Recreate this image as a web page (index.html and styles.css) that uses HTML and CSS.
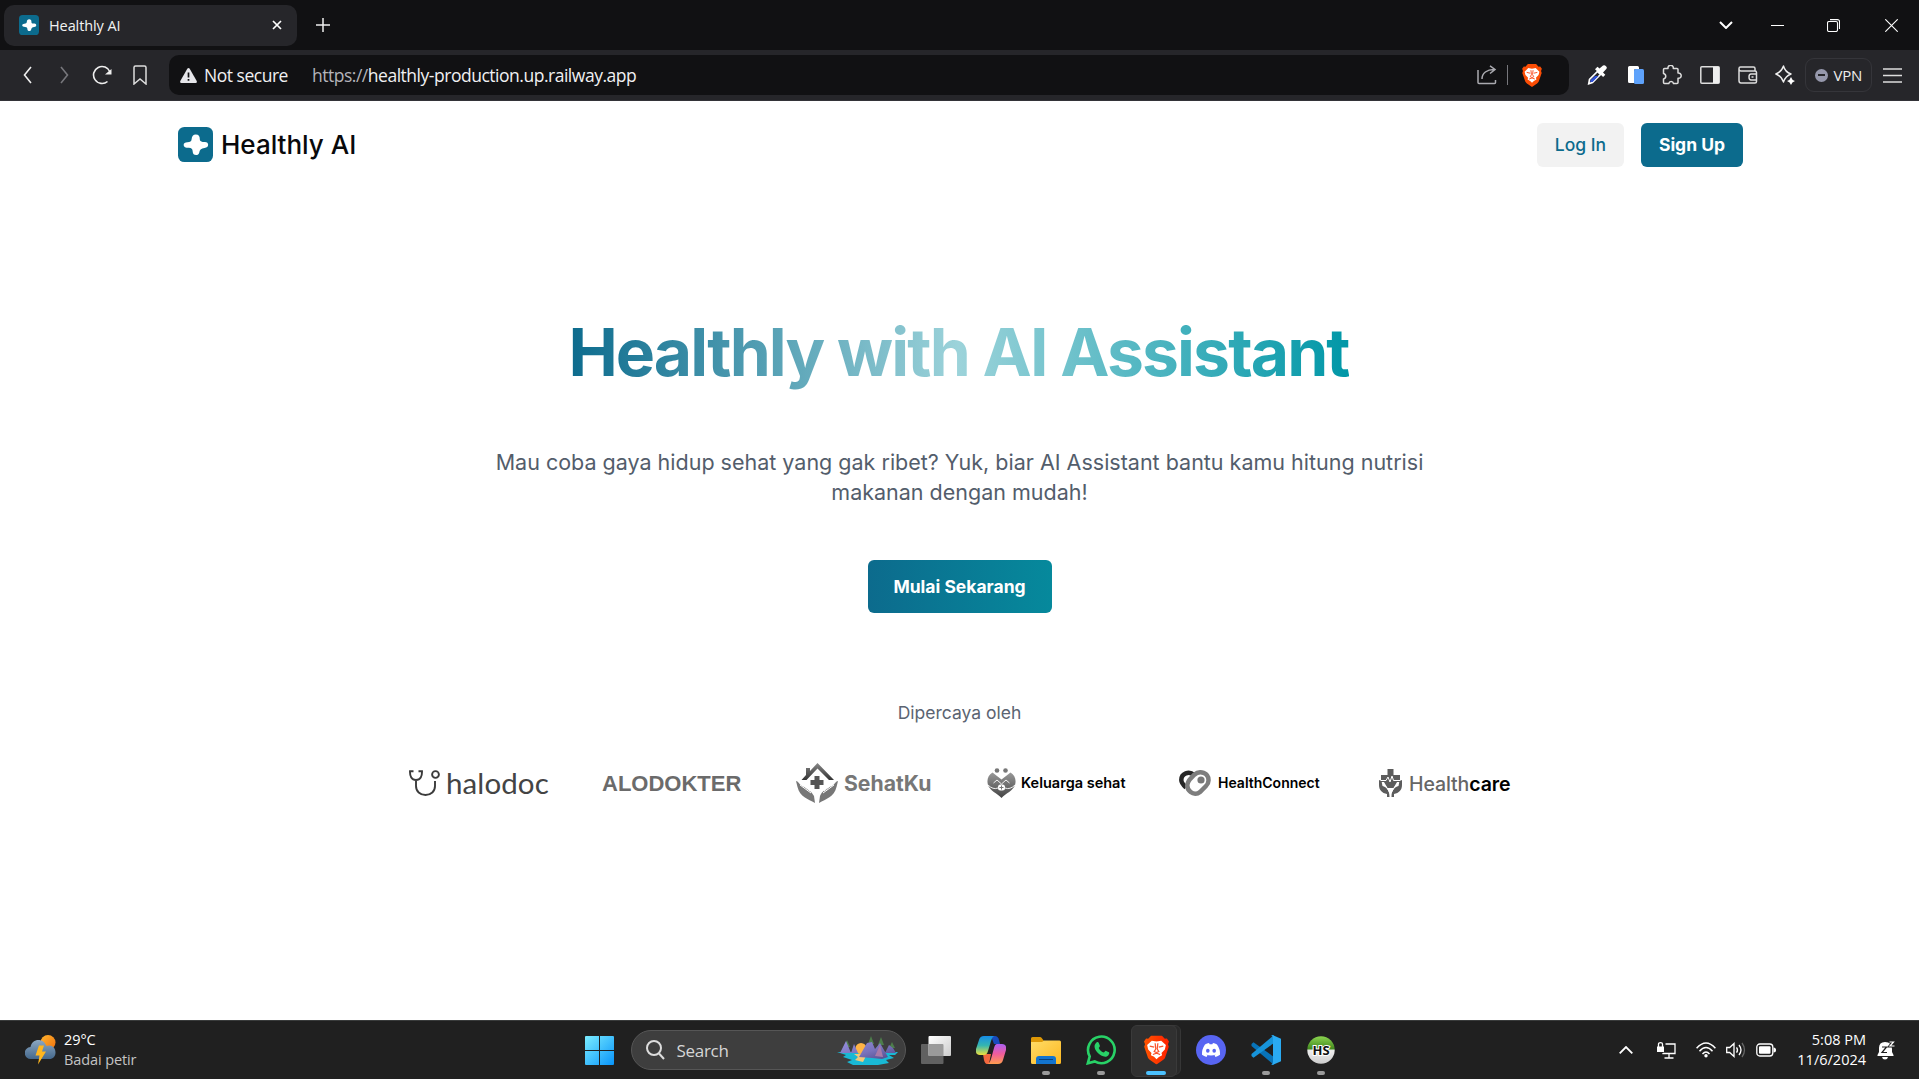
FILE: index.html
```html
<!DOCTYPE html>
<html lang="id">
<head>
<meta charset="utf-8">
<title>Healthly AI</title>
<link rel="stylesheet" href="styles.css">
</head>
<body>
<svg class="defs" width="0" height="0" aria-hidden="true">
  <defs>
    <linearGradient id="braveFill" x1="0" x2="1"><stop offset="0" stop-color="#ff5500"/><stop offset="1" stop-color="#ff2000"/></linearGradient>
    <symbol id="brave" viewBox="0 0 24 28">
      <path d="M7 0h10l3 3.200 2-.3 2 3-1 2.500.8 2.500-3.600 10.500c-.4 1-1.200 1.600-2 2.200L12 28l-6.200-4.400c-.8-.6-1.600-1.200-2-2.200L.2 10.900 1 8.400 0 5.900l2-3 2 .3z"/>
      <path fill="#fff" d="M7.500 5l4.500.9L16.500 5 21 9.300l-1 4.200-3.200 3.300.6 2.200-3.100 1.600L12 22.800l-2.300-2.200L6.600 19l.6-2.200L4 13.500 3 9.300z"/>
      <path fill="none" stroke="#fb542b" stroke-width="1.200" d="M5.500 10.200l4.300 1M18.500 10.200l-4.300 1M10.700 7.500l.6 5.500-1.500 2.500 2.200 1 2.200-1-1.500-2.500.6-5.500M8.500 18.300L12 17l3.500 1.300"/>
    </symbol>
    <symbol id="cross" viewBox="0 0 36 36">
      <rect width="36" height="36" rx="6.500" fill="#0c6b8d"/>
      <path fill="#fff" d="M14 12.500C14.300 9.200 15.500 7.600 18.300 7.600c3 0 4.200 1.600 4.100 4.800 0 2 1 2.700 3 2.900l2.300.2c2.300.2 3.300 1.200 3.300 2.800 0 2-1.300 2.900-3.700 3.300-3.500.6-4.700 1.500-5.400 4.600-.5 2-1.700 2.700-3.300 2.700-2.200 0-3.400-1.200-3.500-3.700-.1-2.700-1.200-3.700-4-3.800-3.300-.1-5.300-.9-5.300-3 0-1.900 1.500-2.600 3.800-2.800 3-.1 4.100-.8 4.400-3.100z"/>
    </symbol>
  </defs>
</svg>

<header class="tabstrip">
  <div class="tab">
    <svg class="tab-icon" width="20" height="20"><use href="#cross"/></svg>
    <span class="tab-title">Healthly AI</span>
    <svg width="10" height="10" viewBox="0 0 10 10" stroke="#fff" stroke-width="1.700"><path d="M1 1l8 8M9 1L1 9"/></svg>
  </div>
  <svg class="newtab" width="14" height="14" viewBox="0 0 14 14" stroke="#eee" stroke-width="1.500"><path d="M7 0v14M0 7h14"/></svg>
  <div class="window-buttons">
    <svg width="14" height="8" viewBox="0 0 14 8" fill="none" stroke="#fff" stroke-width="2"><path d="M1 1l6 6 6-6"/></svg>
    <svg width="13" height="13" viewBox="0 0 13 13" stroke="#fff"><path d="M0 6.500h13"/></svg>
    <svg width="13" height="13" viewBox="0 0 13 13" fill="none" stroke="#fff" stroke-width="1.100"><rect x=".5" y="2.500" width="10" height="10" rx="1.500"/><path d="M3 .6h7.500a2 2 0 0 1 2 2V10"/></svg>
    <svg width="13" height="13" viewBox="0 0 13 13" stroke="#fff" stroke-width="1.100"><path d="M.3.3l12.400 12.400M12.700.3L.3 12.700"/></svg>
  </div>
</header>

<nav class="toolbar">
  <div class="nav-buttons">
    <svg width="20" height="20" viewBox="0 0 20 20" fill="none" stroke="#eee" stroke-width="1.600"><path d="M14 2L7.500 10l6.500 8"/></svg>
    <svg width="20" height="20" viewBox="0 0 20 20" fill="none" stroke="#77777c" stroke-width="1.600"><path d="M6 2l6.500 8L6 18"/></svg>
    <svg width="20" height="20" viewBox="0 0 20 20" fill="none" stroke="#eee" stroke-width="1.600"><path d="M15.500 16.500A8.500 8.500 0 1 1 18 7"/><path fill="#eee" stroke="none" d="M19.500 4v5.500H13z"/></svg>
    <svg width="20" height="20" viewBox="0 0 20 20" fill="none" stroke="#ddd" stroke-width="1.500"><path d="M4 2.500Q4 1 5.500 1h9Q16 1 16 2.500V19l-6-5-6 5z"/></svg>
  </div>
  <div class="address">
    <svg width="17" height="15" viewBox="0 0 17 15"><path fill="#e6e6ea" d="M7.300.7q1.200-1.400 2.400 0L16.700 13q.6 2-1 2H1.300q-1.600 0-1-2z"/><path stroke="#111113" stroke-width="1.700" d="M8.500 4.500v5M8.500 11v1.800"/></svg>
    <span class="secure">Not secure</span>
    <span class="url"><span class="scheme">https://</span>healthly-production.up.railway.app</span>
    <div class="address-actions">
      <svg width="20" height="20" viewBox="0 0 20 20" fill="none" stroke="#aaaab0" stroke-width="1.500"><path d="M1 5v12.500q0 1 1 1h15.500q1 0 1-1V15M5 14c0-6 5-9.500 12-9.500M13 .8l5 3.700-5 4"/></svg>
      <i class="divider"></i>
      <svg width="20" height="23" fill="#fb4d05"><use href="#brave"/></svg>
    </div>
  </div>
  <div class="extensions">
    <svg width="20" height="20" viewBox="0 0 20 20"><path fill="none" stroke="#fff" stroke-width="1.600" d="M10.500 6.500l3 3-8 8-3.800 1.300.8-4.300z"/><path fill="#3152d8" d="M8 11h3.500l-6 6H3.300L3.500 15z"/><path fill="#fff" d="M8 4.300l2.500-2.500 2 1.700L16 .6Q17.500-.3 19 1.200T19.300 4L16 7.600l2.300 2.200-2.200 2.200z"/></svg>
    <svg class="pages" width="18" height="20" viewBox="0 0 18 20"><path fill="#fff" d="M1 2.500Q1 1 2.500 1h8Q12 1 12 2.500V4H8.500Q7 4 7 5.500V18H2.500Q1 18 1 16.500z"/><rect x="7" y="4" width="10" height="15" rx="1.500" fill="#5ea2fb"/></svg>
    <svg width="20" height="20" viewBox="0 0 20 20" fill="none" stroke="#ddd" stroke-width="1.500" stroke-linejoin="round"><path d="M2.500 3.500H6a2.700 2.700 0 1 1 5.300 0H15q1 0 1 1V8a2.700 2.700 0 1 1 0 5.300v4.200q0 1-1 1h-3.500a2.400 2.400 0 0 0-4.700 0H2.500q-1 0-1-1V14a2.800 2.800 0 0 0 0-5.500v-4q0-1 1-1z"/></svg>
    <svg width="20" height="18" viewBox="0 0 20 18"><rect x=".8" y=".8" width="18.400" height="16.400" rx="1" fill="none" stroke="#ddd" stroke-width="1.500"/><path fill="#eee" d="M13 1h6v16h-6z"/></svg>
    <svg width="20" height="18" viewBox="0 0 20 18" fill="none" stroke="#ddd" stroke-width="1.500"><path d="M17 5V2.500Q17 1 15.500 1h-13Q1 1 1 2.500v12Q1 17 3 17h14q1.500 0 1.500-1.500v-9Q18.500 5 17 5H3Q1 5 1 3M18.500 8H13q-2 0-2 3t2 3h5.500M13.500 11h2"/></svg>
    <svg width="20" height="20" viewBox="0 0 20 20" stroke="#eee" stroke-width="1.400" stroke-linejoin="round"><path fill="none" d="M8.500 1q1.500 6 7.500 8-5.500 2-7.500 8-2-6-7.700-8Q6.500 7 8.500 1z"/><path fill="#fff" stroke="none" d="M16 12q.8 3 4 4-3.200 1-4 4-.8-3-4-4 3.200-1 4-4z"/></svg>
  </div>
  <div class="vpn"><i class="vpn-dot"></i><span>VPN</span></div>
  <svg class="menu" width="19" height="15" viewBox="0 0 19 15" stroke="#ddd" stroke-width="1.500"><path d="M0 1h19M0 7.500h19M0 14h19"/></svg>
</nav>

<main class="page">
  <div class="site-header">
    <svg class="brand-icon" width="35" height="35"><use href="#cross"/></svg>
    <span class="brand-name">Healthly AI</span>
    <a class="btn btn-login"><span>Log In</span></a>
    <a class="btn btn-signup"><span>Sign Up</span></a>
  </div>
  <section class="hero">
    <h1><span>Healthly with AI Assistant</span></h1>
    <p class="lead">Mau coba gaya hidup sehat yang gak ribet? Yuk, biar AI Assistant bantu kamu hitung nutrisi makanan dengan mudah!</p>
    <a class="btn btn-start"><span>Mulai Sekarang</span></a>
    <p class="trusted"><span>Dipercaya oleh</span></p>
    <div class="partners">
      <div class="partner halodoc">
        <svg width="32" height="26" viewBox="0 0 32 26" fill="none" stroke="#3b3b3b" stroke-width="1.900"><path d="M4.500 1.300H1C.8 6 2.500 10 7 10s6.200-4 6-8.700H9.500M7 10v6c0 5.500 4 9 9.500 9s9.500-3.500 9.500-9v-5"/><circle cx="26.500" cy="4.500" r="3.400"/></svg>
        <span>halodoc</span>
      </div>
      <div class="partner alodokter"><span>ALODOKTER</span></div>
      <div class="partner sehatku">
        <svg width="42" height="40" viewBox="0 0 42 40">
          <defs><linearGradient id="roof" x2="0" y2="1"><stop stop-color="#888"/><stop offset="1" stop-color="#333"/></linearGradient></defs>
          <path fill="url(#roof)" d="M21.500 0L38 17h-5L21.500 5.500 10.500 17h-5L10 12V5h4v3z"/>
          <path fill="#555" d="M18.500 13h5v4h4v5h-4v4h-5v-4h-4v-5h4z"/>
          <path fill="#777" d="M0 18c2 0 3 3 6 5 5 2 9 5 12 10l1 7c-7-4-15-6-17.500-16zM42 18c-2 0-3 3-6 5-5 2-10 5-12 10l-1 7c7-4 15-6 17.500-16z"/>
          <path fill="none" stroke="#fff" d="M4 22l11 8M38 22l-11 8M7 22l7 6M35 22l-7 6"/>
        </svg>
        <span>SehatKu</span>
      </div>
      <div class="partner keluarga">
        <svg width="29" height="30" viewBox="0 0 29 30">
          <defs><linearGradient id="heart" x2="0" y2="1"><stop stop-color="#999"/><stop offset="1" stop-color="#444"/></linearGradient></defs>
          <circle cx="10" cy="2.500" r="2.300" fill="#777"/><circle cx="18.500" cy="2.500" r="2.300" fill="#777"/>
          <path fill="url(#heart)" d="M5.500 4.500l9 7 9-7C28 7 29.500 12 28 17c-2 6-9 8-13.500 13C10 25 3 23 1 17-.5 12 1 7 5.500 4.500z"/>
          <path fill="none" stroke="#fff" stroke-width=".9" d="M6.500 15l3.500-3 4.500 4 4.500-4 3.500 3M1 17q5 5 10 3M28 17q-5 5-10 3"/>
          <rect x="11" y="16.500" width="7" height="6" rx="2.500" fill="#fff"/><path stroke="#777" d="M14.500 17.500v4M12.500 19.500h4"/>
        </svg>
        <span>Keluarga sehat</span>
      </div>
      <div class="partner connect">
        <svg width="32" height="26" viewBox="0 0 32 26" fill="none">
          <path stroke="#262626" stroke-width="4.500" d="M15 5C10 .5 2.300 3.500 2.300 10c0 3 2 5 4.700 7.500"/>
          <path stroke="#7d7d7d" stroke-width="4.500" d="M11 9.200l4.300-4.500C21-.2 29.800 3 29.500 10.500c0 2.500-1 4-2.500 5.500l-6 6c-6 5-15-2-12-9.500.5-1.300 1.200-2.300 2-3.300z"/>
          <circle cx="22" cy="10" r="3.600" fill="#777"/>
        </svg>
        <span>HealthConnect</span>
      </div>
      <div class="partner care">
        <svg width="23" height="28" viewBox="0 0 23 28" fill="#5c5c5c">
          <path d="M8.500 0h6v6H21v7h-3l-3.500 6H8.500L5 13H2V6h6.500z"/>
          <path d="M0 11l2.500 1 1 5c4 1 7 4 7 11H8v-3c-5-1-8-4-8-9zM23 11l-2.500 1-1 5c-4 1-7 4-7 11H15v-3c5-1 8-4 8-9z"/>
          <path fill="none" stroke="#fff" d="M2 11.500h5L9 8l2 5 2-6 1.500 4.500H21M4 14l4 5 3 5M19 14l-4 5-3 5"/>
        </svg>
        <span>Health<b>care</b></span>
      </div>
    </div>
  </section>
</main>

<footer class="taskbar">
  <div class="weather">
    <svg width="31" height="30" viewBox="0 0 31 30">
      <defs>
        <linearGradient id="sun" x2="1" y2="1"><stop stop-color="#ffb52d"/><stop offset="1" stop-color="#f0700e"/></linearGradient>
        <linearGradient id="cloud" x2="0" y2="1"><stop stop-color="#8da8c2"/><stop offset="1" stop-color="#44688c"/></linearGradient>
      </defs>
      <circle cx="23" cy="7.500" r="7.500" fill="url(#sun)"/>
      <path fill="url(#cloud)" d="M6 24a6 6 0 0 1-.5-12C7 3 18.500 2.500 21.500 11c5-2 9 1.500 9 6.500 0 4-2.500 6.500-6 6.500z"/>
      <path fill="#ffb61e" d="M14 10.500h5l-2 6h4L13 29.500l1.500-9h-4z"/>
    </svg>
    <div class="weather-text"><span class="temp">29°C</span><span class="cond">Badai petir</span></div>
  </div>
  <div class="apps">
    <div class="app">
      <svg width="29" height="29" viewBox="0 0 29 29"><defs><linearGradient id="win" gradientUnits="userSpaceOnUse" x1="0" y1="0" x2="29" y2="29"><stop stop-color="#7bedff"/><stop offset="1" stop-color="#0894fa"/></linearGradient></defs><path fill="url(#win)" d="M0 1q0-1 1-1h13v14H0zM15 0h13q1 0 1 1v13H15zM0 15h14v14H1q-1 0-1-1zM15 15h14v13q0 1-1 1H15z"/></svg>
    </div>
    <div class="search">
      <svg width="19" height="20" viewBox="0 0 19 20" fill="none" stroke="#ddd" stroke-width="2"><circle cx="8" cy="8" r="7"/><path d="M13 13.500l5 5.500"/></svg>
      <span>Search</span>
      <svg class="scene" width="62" height="29" viewBox="0 0 62 29">
        <defs><linearGradient id="peak" x2="1" y2="1"><stop stop-color="#9690df"/><stop offset=".55" stop-color="#7972bb"/><stop offset="1" stop-color="#4c4584"/></linearGradient></defs>
        <path fill="#19b9d5" d="M0 16h61l-3 3h-6l5 3-8 2 3 3-11 2H16l-6-3 5-2-9-3 3-2z"/>
        <circle cx="24" cy="12.500" r="5.500" fill="#ffb445"/><path fill="#f3c878" d="M17 18h13l-4 8-8-2 3-3z"/>
        <path fill="#4d7d4b" d="M10 4l3 7H7zM34 0l3 8h-6zM44 1l3 8h-6zM55 6l3 6h-6z"/>
        <path fill="url(#peak)" d="M3 17l6-12 5 12zM14 17l3-9 4 9zM22 21l8-14 5-1 3 7 5-6 8 14-6 2-10-1zM48 17l4-8 4 3 3 5z"/>
        <path fill="#a87aa8" d="M38 20l5-11 3 12z"/>
      </svg>
    </div>
    <div class="app">
      <svg width="30" height="28" viewBox="0 0 30 28"><defs><linearGradient id="pane" x2="1" y2="1"><stop stop-color="#fff"/><stop offset="1" stop-color="#ccc"/></linearGradient></defs><rect y="8" width="22.500" height="20" rx="1" fill="#616161"/><rect x="7.500" width="22.500" height="20" rx="1" fill="url(#pane)"/><path fill="#9a9a9a" d="M7.500 8h14q1 0 1 1v11h-14q-1 0-1-1z"/></svg>
    </div>
    <div class="app">
      <svg width="30" height="28" viewBox="0 0 30 28">
        <defs>
          <linearGradient id="cpA" x2="0" y2="1"><stop stop-color="#168de8"/><stop offset=".5" stop-color="#35b6b0"/><stop offset="1" stop-color="#efe13c"/></linearGradient>
          <linearGradient id="cpB" x2="0" y2="1"><stop stop-color="#ac60f3"/><stop offset=".5" stop-color="#f05c9b"/><stop offset="1" stop-color="#ff9d4e"/></linearGradient>
        </defs>
        <path fill="#174bbd" d="M15 0h4q3 0 4 4l1 4h-6z"/><path fill="#f4683f" d="M7 18h8l-2 10h-2q-2 0-3-4z"/>
        <path fill="url(#cpA)" d="M8 0h10q-2 1-3 5l-3 10q-1 4-4 4H4q-5 0-4-6L3 4q1-4 5-4z"/>
        <path fill="url(#cpB)" d="M21 8h5q5 0 4 6l-3 10q-1 4-5 4H12q2-1 3-5l3-11q1-4 3-4z"/>
      </svg>
    </div>
    <div class="app running">
      <svg width="30" height="27" viewBox="0 0 30 27"><defs><linearGradient id="fold" x2="1" y2="1"><stop stop-color="#ffdc67"/><stop offset="1" stop-color="#fdb821"/></linearGradient></defs><path fill="#de9806" d="M0 1.500Q0 0 1.500 0H9q1 0 1.500.8L13 4v5H0z"/><path fill="url(#fold)" d="M0 5h11l2-1.500h15.500q1.500 0 1.500 1.500v20.500q0 1.500-1.500 1.500h-27Q0 27 0 25.500z"/><path fill="#1374ce" d="M5 27v-5q0-3 3-3h14q3 0 3 3v5z"/><path stroke="#09427c" d="M8 22.500h14"/></svg>
    </div>
    <div class="app running">
      <svg width="30" height="30" viewBox="0 0 30 30"><path fill="none" stroke="#28d267" stroke-width="2.600" d="M1.800 28.300l1.900-7A13.300 13.300 0 1 1 8.700 26.400z"/><path fill="#28d267" d="M10.500 7.500c.5-.5 1.800-.6 2.200.3l1.200 2.900c.2.800-.8 1.600-1.200 2.200 1.300 2.500 3 3.700 5.200 4.700.7-.6 1.400-2.100 2.200-1.700l2.800 1.400c.8.400.2 2.200-.7 3.200-3 3-8-.2-10.300-2.500C9 15 6.800 10.500 10.500 7.500z"/></svg>
    </div>
    <div class="app running active"><div class="stack"></div>
      <svg width="25" height="30" viewBox="0 0 24 28" fill="url(#braveFill)"><use href="#brave"/></svg>
    </div>
    <div class="app">
      <svg width="30" height="30" viewBox="0 0 30 30"><circle cx="15" cy="15" r="15" fill="#5865f2"/><path fill="#fff" d="M9 9.500Q11 8.300 13 8l.7 1.200h2.600L17 8q2 .3 4 1.500 3.400 5 3 10.300-2 1.600-4.500 2.200l-1-1.700 1.500-.8q-5 2-10 0l1.500.8-1 1.700Q8 21.400 6 19.800 5.600 14.500 9 9.500z"/><ellipse cx="11.800" cy="15.700" rx="1.800" ry="2" fill="#5865f2"/><ellipse cx="18.200" cy="15.700" rx="1.800" ry="2" fill="#5865f2"/></svg>
    </div>
    <div class="app running">
      <svg width="30" height="30" viewBox="0 0 30 30"><path fill="#0873b8" d="M.5 9l2-1.700L23 22v8L.5 11z"/><path fill="#1794da" d="M.5 21l2 1.700L23 8V0L.5 19z"/><path fill="#2aaaf2" d="M21.500 0L30 3.800v22.400L21.500 30 20 29q2 .5 2-2V3q0-2.500-2-2z"/></svg>
    </div>
    <div class="app running">
      <svg width="28" height="28" viewBox="0 0 28 28"><defs><linearGradient id="hs" x2="0" y2="1"><stop stop-color="#8bd44f"/><stop offset=".45" stop-color="#438b20"/><stop offset=".52" stop-color="#eee"/><stop offset="1" stop-color="#ccc"/></linearGradient></defs><circle cx="14" cy="14" r="13.700" fill="url(#hs)"/><text class="hs-label" x="14" y="18.500" text-anchor="middle">HS</text></svg>
    </div>
  </div>
  <div class="tray">
    <svg width="14" height="8" viewBox="0 0 14 8" fill="none" stroke="#fff" stroke-width="1.800"><path d="M.7 7.300L7 1l6.300 6.300"/></svg>
    <svg class="net" width="19" height="17" viewBox="0 0 19 17" fill="none" stroke="#fff" stroke-width="1.300"><path d="M8.500 2H18v9.500H6V11M12 11.500V16M7.500 16h9"/><path fill="#fff" stroke="none" d="M0 4.500h7V10H0z"/><path d="M1.500 5V2q0-1.300 2-1.300t2 1.300v3"/></svg>
    <svg class="wifi" width="20" height="16" viewBox="0 0 20 16" fill="none" stroke="#fff" stroke-width="1.500"><path d="M.6 6.300q9.400-10.500 18.800 0M3.500 9.200q6.500-7.500 13 0M6.500 12q3.500-4.200 7 0"/><circle cx="10" cy="13.800" r="1.700" fill="#fff" stroke="none"/></svg>
    <svg class="vol" width="20" height="16" viewBox="0 0 20 16" fill="none" stroke="#fff" stroke-width="1.300"><path d="M.7 5.500h3L8 1.500v13l-4.300-4h-3zM10.500 5.300q2 2.700 0 5.400M13 3q4 5 0 10"/><path stroke="#666" d="M16 1q5 7 0 14"/></svg>
    <svg class="bat" width="20" height="14" viewBox="0 0 20 14"><rect x=".8" y="1" width="16" height="12" rx="3" fill="none" stroke="#fff" stroke-width="1.300"/><rect x="3" y="3.200" width="11.500" height="7.600" rx="1" fill="#fff"/><path fill="#fff" d="M17.500 4.500q2.500 0 2.500 2.500t-2.500 2.500z"/></svg>
    <div class="clock"><span>5:08 PM</span><span>11/6/2024</span></div>
    <svg class="bell" width="18" height="19" viewBox="0 0 18 19"><path fill="#fff" d="M2 7q0-6 6-6 7 0 7 7v3l1.500 3v1H.5v-1L2 11zM5 16h6q-.5 2.500-3 2.500T5 16z"/><path fill="none" stroke="#1f1f1f" stroke-width="3" d="M12 0h5l-4 5h5"/><path fill="none" stroke="#1f1f1f" stroke-width="1.200" d="M5 6h4.500l-4.500 5.500h5"/><path fill="none" stroke="#fff" stroke-width="1.200" d="M12.500 1h4L13 5h4.500"/></svg>
  </div>
</footer>
</body>
</html>
```
FILE: styles.css
```css
* { box-sizing: border-box; }
body { margin: 0; width: 1919px; height: 1079px; display: flex; flex-direction: column; overflow: hidden; background: #fff; font-family: Inter, sans-serif; }
svg { flex: none; display: block; }
.defs { position: absolute; }
p, h1 { margin: 0; }
span { white-space: nowrap; }

.tabstrip, .toolbar { font-family: "Open Sans", "Noto Sans", sans-serif; display: flex; align-items: center; }
.tabstrip { height: 50px; background: #111113; }
.tab { width: 293px; height: 41px; margin-left: 4px; padding: 0 15px; border-radius: 10px; background: #26262a; display: flex; align-items: center; }
.tab-title { flex: 1; margin-left: 10px; font-size: 14.500px; letter-spacing: -.1px; color: #f2f2f2; }
.newtab { margin-left: 19px; }
.window-buttons { margin-left: auto; margin-right: 21px; display: flex; align-items: center; }
.window-buttons svg + svg { margin-left: 38px; }
.window-buttons svg:nth-child(3) { margin-left: 43px; }
.window-buttons svg:nth-child(4) { margin-left: 45px; }

.toolbar { height: 51px; background: #26262a; border-bottom: 1px solid #333338; }
.nav-buttons { width: 169px; padding-left: 17px; display: flex; gap: 17.700px; }
.address { width: 1400px; height: 40px; border-radius: 10px; background: #111113; display: flex; align-items: center; padding: 0 27px 0 11px; font-size: 17.500px; color: #f0f0f2; }
.address > span { line-height: 22px; padding-bottom: 1px; }
.secure { margin-left: 7px; letter-spacing: -.48px; }
.url { margin-left: 24px; letter-spacing: -.48px; }
.scheme { color: #b4b4ba; }
.address-actions { margin-left: auto; display: flex; align-items: center; gap: 9.500px; }
.divider { width: 1px; height: 20px; background: #77777c; margin-right: 5px; }
.extensions { margin-left: 9.500px; display: grid; grid-template-columns: repeat(6, 37.600px); justify-items: center; align-items: center; }
.pages { margin-left: 2px; }
.vpn { width: 67px; height: 34px; margin-left: .5px; border: 1px solid #35353a; border-radius: 9px; display: flex; align-items: center; gap: 6px; padding-left: 9px; font-size: 15px; letter-spacing: -.3px; color: #eee; }
.vpn-dot { width: 13px; height: 13px; border-radius: 50%; background: #9698ac; display: grid; place-items: center; }
.vpn-dot::after { content: ""; width: 7px; height: 1.500px; background: #26262a; }
.menu { margin-left: 11px; }

.page { height: 919px; }
.site-header { height: 88px; padding: 0 176px 0 178px; display: flex; align-items: center; }
.brand-icon { margin-bottom: 1px; }
.brand-name { margin-left: 8px; margin-right: auto; margin-bottom: 2px; font-size: 26px; font-weight: 500; color: #09090b; }
.btn { display: flex; align-items: center; justify-content: center; border-radius: 6px; font-size: 17.500px; font-weight: 700; color: #fff; }
.btn-login { width: 87px; height: 44px; padding-bottom: 1px; background: #f2f2f2; color: #0c6b8d; font-weight: 500; }
.btn-signup { width: 102px; height: 44px; padding-bottom: 1px; margin-left: 17px; background: #0c6b8d; }
.hero { display: flex; flex-direction: column; align-items: center; padding-top: 123px; }
h1 { height: 80px; line-height: 80px; font-size: 66px; font-weight: 700; letter-spacing: -1.900px; padding-right: 2px; }
h1 span { display: block; color: transparent; background: linear-gradient(to right, #0c6b8d, #9cd3da 50%, #0097a7); -webkit-background-clip: text; background-clip: text; }
.lead { margin-top: 55px; width: 940px; text-align: center; font-size: 21.500px; line-height: 30px; color: #535d6b; }
.btn-start { margin-top: 53px; width: 184px; height: 53px; background: linear-gradient(to right, #0c6b8d, #06899c); }
.trusted { margin-top: 87px; font-size: 17.500px; line-height: 25px; color: #5b6472; }
.partners { align-self: stretch; margin-top: 33px; padding-left: 409px; height: 50px; display: flex; align-items: center; }
.partner { display: flex; align-items: center; }
.halodoc { width: 193px; gap: 5px; font: 400 29.500px Lato, sans-serif; letter-spacing: .1px; color: #444; }
.halodoc span { margin-bottom: 2px; }
.alodokter { width: 194px; font: 700 22px "Liberation Sans", sans-serif; color: #6b6b6b; }
.alodokter span { margin-top: 1px; }
.sehatku { width: 191px; gap: 6px; font-size: 21.200px; font-weight: 700; color: #777; }
.keluarga { width: 192px; gap: 5px; font-size: 14.500px; font-weight: 600; color: #000; }
.connect { width: 200px; gap: 7px; font-size: 14px; font-weight: 600; color: #000; }
.keluarga span, .connect span { margin-bottom: 2px; }
.care { gap: 7px; font-size: 19.500px; font-weight: 500; letter-spacing: -.1px; color: #666; }
.care span { margin-top: 2px; }
.care b { color: #000; font-weight: 600; }

.taskbar { height: 59px; background: #202020; border-top: 1px solid #393b3b; display: flex; align-items: center; font-family: "Open Sans", "Noto Sans", sans-serif; color: #fff; }
.weather { width: 571.500px; padding-left: 25px; display: flex; align-items: center; gap: 8px; font-size: 14.500px; letter-spacing: -.1px; }
.weather-text, .clock { display: flex; flex-direction: column; line-height: 20px; }
.cond { color: #c4c4c4; }
.apps { display: flex; align-items: center; height: 58px; }
.app { width: 55px; height: 58px; display: flex; align-items: center; justify-content: center; position: relative; }
.running::after { content: ""; position: absolute; bottom: 4px; left: 23.500px; width: 8px; height: 4px; border-radius: 2px; background: #9a9a9a; }
.active::before { content: ""; position: absolute; left: 2.500px; top: 4px; width: 44px; height: 50px; border-radius: 6px; background: #303030; border: 1px solid #3a3a3a; z-index: 1; }
.stack { position: absolute; left: 32px; top: 4px; width: 20px; height: 50px; border-radius: 6px; background: #292929; border: 1px solid #363636; }
.active svg { position: relative; z-index: 2; }
.active::after { width: 20px; left: 17.500px; background: #4cc2ff; z-index: 2; }
.search { width: 275px; height: 40px; margin: 0 3px 0 4px; border: 1px solid #565656; border-radius: 20px; background: #3e3e3e; display: flex; align-items: center; padding: 0 6px 0 14px; font-size: 17px; letter-spacing: -.3px; color: #d6d6d6; }
.search span { margin-left: 12px; }
.scene { margin-left: auto; }
.hs-label { font: 700 13px "Open Sans", sans-serif; fill: #111; stroke: #fff; stroke-width: 2px; paint-order: stroke; }
.tray { margin-left: auto; padding-right: 24px; display: flex; align-items: center; }
.net { margin-left: 24px; }
.wifi { margin-left: 20px; }
.vol { margin-left: 10px; }
.bat { margin-left: 10px; }
.clock { width: 90px; align-items: flex-end; font-size: 14.500px; }
.bell { margin-left: 11px; }
```
